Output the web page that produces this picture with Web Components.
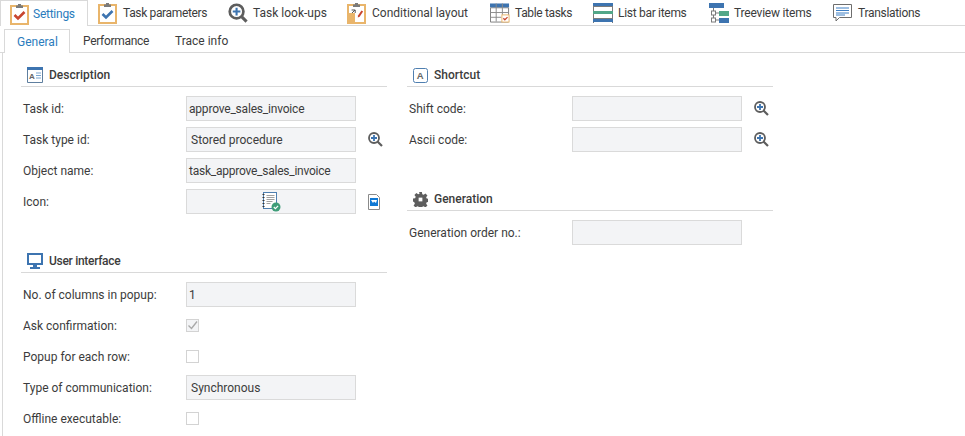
<!DOCTYPE html>
<html>
<head>
<meta charset="utf-8">
<style>
  html, body { margin: 0; padding: 0; background: #fff; }
  body { width: 965px; height: 436px; overflow: hidden; font-family: Roboto, "Open Sans", "Liberation Sans", sans-serif; font-size: 12px; color: #3c3c3c; }
</style>
</head>
<body>
<script>
(function () {
  const CLIP = (mark) => `<svg width="19" height="22" viewBox="0 0 19 22">
    <rect x="1" y="3" width="17" height="18" fill="#fff" stroke="#e9b56b" stroke-width="2"/>
    <path d="M6 2.500h2V1h3v1.500h2V5H6z" fill="#7b7b7b"/>${mark}</svg>`;

  const ICONS = {
    settings: CLIP('<path d="M4.500 12l3.500 3.500 6.500-6.500" fill="none" stroke="#c8452f" stroke-width="2.600"/>'),
    params: CLIP('<path d="M4.500 12l3.500 3.500 6.500-6.500" fill="none" stroke="#3d74b0" stroke-width="2.600"/>'),
    lookup: `<svg width="21" height="22" viewBox="0 0 21 22">
      <circle cx="9" cy="9.500" r="7.200" fill="#fff" stroke="#5d5d5d" stroke-width="2.800"/>
      <path d="M14.500 15l5 5" stroke="#5d5d5d" stroke-width="3.200"/>
      <path d="M9 5.500v8M5 9.500h8" stroke="#3d74b0" stroke-width="2.200"/></svg>`,
    conditional: `<svg width="19" height="22" viewBox="0 0 19 22">
      <rect x="1" y="3" width="17" height="18" fill="#fff" stroke="#e9b56b" stroke-width="2"/>
      <path d="M6 2.500h2V1h3v1.500h2V5H6z" fill="#7b7b7b"/>
      <path d="M1 11h7v9H1z" fill="#e9b56b"/>
      <path d="M5 11l3-3M4.600 8h3.600v3" fill="none" stroke="#555" stroke-width="1"/>
      <path d="M11 13.500l3.500-5 1.600 1.100-3.500 5.200-1.800.6z" fill="#c8452f"/></svg>`,
    table: `<svg width="21" height="20" viewBox="0 0 21 20">
      <path d="M.5 4.500h19v15H.5z" fill="#fff" stroke="#7b7b7b"/>
      <path d="M0 0h20v4H0z" fill="#3d74b0"/>
      <path d="M6.500 0v19M13 0v12" stroke="#8a8a8a"/>
      <path d="M0 9.500h20M0 14.500h12" stroke="#8a8a8a"/>
      <rect x="12.500" y="12" width="7.500" height="7.500" fill="#fff" stroke="#e9b56b"/>
      <path d="M14 15.500l1.600 1.600 2.800-2.800" fill="none" stroke="#c8452f" stroke-width="1.300"/></svg>`,
    listbar: `<svg width="20" height="20" viewBox="0 0 20 20">
      <path d="M0 0h20v3H0z" fill="#3d74b0"/>
      <path d="M.5 3v5M19.500 3v5M.5 11v5M19.500 11v5M.5 19v1M19.500 19v1" stroke="#7b7b7b"/>
      <path d="M0 3.500h20" stroke="#7b7b7b"/>
      <path d="M0 8h20v3H0z" fill="#52a688"/>
      <path d="M0 15.500h20" stroke="#7b7b7b"/>
      <path d="M0 16h20v3H0z" fill="#3d74b0"/></svg>`,
    tree: `<svg width="20" height="20" viewBox="0 0 20 20">
      <path d="M0 0h15v5H0z" fill="#3d74b0"/>
      <path d="M4.500 5v3M4.500 12v3M7 10h3M7 17h3" stroke="#7b7b7b"/>
      <rect x="2.500" y="8" width="4" height="4" fill="#fff" stroke="#7b7b7b"/>
      <rect x="2.500" y="15" width="4" height="4" fill="#fff" stroke="#7b7b7b"/>
      <path d="M10 8h10v5H10z" fill="#52a688"/>
      <path d="M10 15h10v5H10z" fill="#3d74b0"/></svg>`,
    translate: `<svg width="19" height="18" viewBox="0 0 19 18">
      <path d="M.5.500h18v13H6.500L3 17v-3.500H.5z" fill="#fff" stroke="#6e6e6e"/>
      <path d="M3 4h13M3 6.500h13M3 9h13M3 11h9" stroke="#3d7fc4"/></svg>`,
    description: `<svg width="16" height="16" viewBox="0 0 16 16">
      <path d="M.5 1h15v14.500H.5z" fill="#fff" stroke="#5f7f9f"/>
      <path d="M0 0h16v3H0z" fill="#3d74b0"/>
      <text x="2" y="12" font-family="Liberation Sans, sans-serif" font-size="8" font-weight="700" fill="#666">A</text>
      <path d="M9 6h5M9 8.500h5M9 11h5" stroke="#7aa6d0"/></svg>`,
    monitor: `<svg width="16" height="16" viewBox="0 0 16 16">
      <rect x="1" y="1" width="14" height="10" fill="#fff" stroke="#3d74b0" stroke-width="2"/>
      <path d="M6 12h4v2H6zM3 14h10v2H3z" fill="#3d74b0"/></svg>`,
    shortcut: `<svg width="15" height="15" viewBox="0 0 15 15">
      <rect x=".5" y=".5" width="14" height="14" rx="2" fill="#fff" stroke="#4f7fb0"/>
      <text x="3.800" y="11" font-family="Liberation Sans, sans-serif" font-size="9.500" font-weight="700" fill="#666">A</text></svg>`,
    gear: `<svg width="15" height="15" viewBox="0 0 16 16">
      <path d="M6.500 0h3l.4 2.300 1.500.6L13.300 1.500l2.100 2.100-1.400 1.900.6 1.500 2.400.5v3l-2.400.4-.6 1.500 1.400 2-2.100 2.100-2-1.400-1.400.6-.4 2.300h-3l-.4-2.300-1.500-.6-1.900 1.400-2.100-2.100 1.400-2-.6-1.500L0 10V7l2.300-.4.600-1.500-1.400-2L3.600 1l1.900 1.400 1.500-.6z" fill="#5e5e5e"/>
      <rect x="6" y="6" width="4" height="4" fill="#fff"/></svg>`,
    zoom: `<svg width="15" height="15" viewBox="0 0 15 15">
      <circle cx="6" cy="6" r="5" fill="#fff" stroke="#5d5d5d" stroke-width="1.800"/>
      <path d="M9.500 9.500l4.500 4.500" stroke="#5d5d5d" stroke-width="2.200"/>
      <path d="M6 3v6M3 6h6" stroke="#3d74b0" stroke-width="1.800"/></svg>`,
    image: `<svg width="12" height="16" viewBox="0 0 12 16">
      <path d="M.5.500h8l3 3v12H.5z" fill="#fff" stroke="#8a8a8a"/>
      <path d="M2 4h8v8H2z" fill="#0f78d4"/>
      <path d="M3 6h6l-1 3L6 7.500 5 9z" fill="#fff"/></svg>`,
    taskfile: `<svg width="19" height="20" viewBox="0 0 19 20">
      <rect x="1.500" y=".5" width="13" height="16" fill="#fff" stroke="#4f7fb0"/>
      <path d="M1.500 2v1M1.500 5v1M1.500 8v1M1.500 11v1M1.500 14v1" stroke="#333" stroke-width="2"/>
      <path d="M4.500 3.500h8M4.500 5.500h8M4.500 7.500h8M4.500 9.500h6M4.500 11.500h4" stroke="#a0a0a0"/>
      <circle cx="14" cy="15" r="4.500" fill="#3e9d78"/>
      <path d="M11.800 15l1.600 1.600 2.700-2.700" fill="none" stroke="#fff" stroke-width="1.200"/></svg>`
  };

  class UiIcon extends HTMLElement {
    connectedCallback() {
      const shadow = this.shadowRoot || this.attachShadow({ mode: "open" });
      shadow.innerHTML = `<style>
        :host { display: inline-flex; align-items: center; justify-content: center; flex: none; }
        :host([box]) { width: 20px; justify-content: flex-start; }
        svg { display: block; }
      </style>${ICONS[this.getAttribute("name")] || ""}`;
    }
  }

  class TabStrip extends HTMLElement {
    constructor() {
      super();
      const shadow = this.attachShadow({ mode: "open" });
      shadow.innerHTML = `<style>
        :host { display: flex; box-sizing: border-box; height: var(--strip-height, 26px); padding-left: var(--strip-left, 0); padding-top: var(--strip-top, 0); border-bottom: 1px solid #d9d9d9; }
      </style><slot></slot>`;
    }
  }

  class TabItem extends HTMLElement {
    constructor() {
      super();
      const shadow = this.attachShadow({ mode: "open" });
      shadow.innerHTML = `<style>
        :host { display: flex; align-items: center; gap: 5px; flex: none; box-sizing: border-box; height: 100%; white-space: nowrap; padding: var(--tab-pad); padding-top: 1px; color: #3c3c3c; }
        :host([active]) { color: #2b7cbd; background: #fff; border: 1px solid #d9d9d9; border-bottom: 0; margin-bottom: -1px; height: calc(100% + 1px); padding-left: var(--active-left); gap: var(--active-gap, 5px); }
      </style><slot></slot>`;
    }
  }

  class FormGroup extends HTMLElement {
    constructor() {
      super();
      const shadow = this.attachShadow({ mode: "open" });
      shadow.innerHTML = `<style>
        :host { display: block; width: 366px; }
        .head { display: flex; align-items: center; gap: 6px; box-sizing: border-box; height: 23px; padding-left: 6px; border-bottom: 1px solid #d9d9d9; margin-bottom: 9px; font-weight: 500; color: #3c3c3c; }
        .title { letter-spacing: var(--title-spacing, normal); }
        .rows { display: grid; row-gap: 6px; padding-left: 2px; }
      </style>
      <div class="head"><slot name="icon"></slot><span class="title"></span></div>
      <div class="rows"><slot></slot></div>`;
    }
    connectedCallback() {
      this.shadowRoot.querySelector(".title").textContent = this.getAttribute("title");
      this.removeAttribute("title");
    }
  }

  class FormRow extends HTMLElement {
    constructor() {
      super();
      const shadow = this.attachShadow({ mode: "open" });
      shadow.innerHTML = `<style>
        :host { display: grid; grid-template-columns: 163px 170px 33px; align-items: center; height: 25px; }
        .label { white-space: nowrap; padding-top: 1px; }
        .action { padding-left: 12px; display: flex; }
      </style>
      <span class="label"></span>
      <div><slot></slot></div>
      <div class="action"><slot name="action"></slot></div>`;
    }
    connectedCallback() {
      this.shadowRoot.querySelector(".label").textContent = this.getAttribute("label");
    }
  }

  class FieldBox extends HTMLElement {
    constructor() {
      super();
      const shadow = this.attachShadow({ mode: "open" });
      shadow.innerHTML = `<style>
        :host { display: flex; align-items: center; box-sizing: border-box; width: 170px; height: 25px; padding-left: 2px; background: #f3f4f6; border: 1px solid #dadada; white-space: nowrap; color: #3c3c3c; }
        :host([lookup]) { padding-left: 4px; }
        :host([center]) { justify-content: center; padding-left: 0; }
      </style><slot></slot>`;
    }
  }

  class CheckBox extends HTMLElement {
    constructor() {
      super();
      const shadow = this.attachShadow({ mode: "open" });
      shadow.innerHTML = `<style>
        :host { display: block; box-sizing: border-box; width: 13px; height: 13px; background: #fff; border: 1px solid #d3d3d3; }
        :host([checked]) { background: #f3f4f6; }
        svg { display: none; }
        :host([checked]) svg { display: block; }
      </style>
      <svg width="11" height="11" viewBox="0 0 11 11"><path d="M1.500 5.500l3 3 5.500-7" fill="none" stroke="#a9a9a9" stroke-width="1.400"/></svg>`;
    }
  }

  class SettingsPage extends HTMLElement {
    constructor() {
      super();
      const shadow = this.attachShadow({ mode: "open" });
      shadow.innerHTML = `<style>
        :host { display: block; height: 436px; }
        .main { --strip-height: 26px; --tab-pad: 0 0 0 10px; --active-left: 9px; --active-gap: 3px; }
        .sub { --strip-height: 27px; --strip-left: 4px; --strip-top: 3px; --tab-pad: 0 0 0 13px; --active-left: 12px; align-items: flex-end; }
        .edge { border-left: 1px solid #d9d9d9; margin-left: 2px; height: 384px; }
        .body { display: flex; gap: 20px; padding: 11px 0 0 18px; }
        .col { display: flex; flex-direction: column; }
        .ui, .gen { margin-top: 36px; }
        .ui { --title-spacing: -.3px; }
      </style>
      <tab-strip class="main">
        <tab-item active style="width:88px;letter-spacing:-.25px"><ui-icon box name="settings"></ui-icon>Settings</tab-item>
        <tab-item style="width:130px;letter-spacing:-.35px"><ui-icon box name="params"></ui-icon>Task parameters</tab-item>
        <tab-item style="width:119px"><ui-icon box name="lookup"></ui-icon>Task look-ups</tab-item>
        <tab-item style="width:143px"><ui-icon box name="conditional"></ui-icon>Conditional layout</tab-item>
        <tab-item style="width:103px;letter-spacing:-.35px"><ui-icon box name="table"></ui-icon>Table tasks</tab-item>
        <tab-item style="width:116px;letter-spacing:-.3px"><ui-icon box name="listbar"></ui-icon>List bar items</tab-item>
        <tab-item style="width:124px;letter-spacing:-.2px"><ui-icon box name="tree"></ui-icon>Treeview items</tab-item>
        <tab-item style="letter-spacing:-.3px"><ui-icon box name="translate"></ui-icon>Translations</tab-item>
      </tab-strip>
      <tab-strip class="sub">
        <tab-item active style="width:66px">General</tab-item>
        <tab-item style="width:92px;letter-spacing:-.3px">Performance</tab-item>
        <tab-item>Trace info</tab-item>
      </tab-strip>
      <div class="edge">
        <div class="body">
          <div class="col">
            <form-group title="Description">
              <ui-icon slot="icon" name="description"></ui-icon>
              <form-row label="Task id:"><field-box style="letter-spacing:-.2px">approve_sales_invoice</field-box></form-row>
              <form-row label="Task type id:"><field-box lookup>Stored procedure</field-box><ui-icon slot="action" name="zoom"></ui-icon></form-row>
              <form-row label="Object name:"><field-box style="letter-spacing:-.24px">task_approve_sales_invoice</field-box></form-row>
              <form-row label="Icon:"><field-box center><ui-icon name="taskfile"></ui-icon></field-box><ui-icon slot="action" name="image"></ui-icon></form-row>
            </form-group>
            <form-group class="ui" title="User interface">
              <ui-icon slot="icon" name="monitor"></ui-icon>
              <form-row label="No. of columns in popup:"><field-box>1</field-box></form-row>
              <form-row label="Ask confirmation:"><check-box checked></check-box></form-row>
              <form-row label="Popup for each row:"><check-box></check-box></form-row>
              <form-row label="Type of communication:"><field-box lookup>Synchronous</field-box></form-row>
              <form-row label="Offline executable:"><check-box></check-box></form-row>
            </form-group>
          </div>
          <div class="col">
            <form-group title="Shortcut">
              <ui-icon slot="icon" name="shortcut"></ui-icon>
              <form-row label="Shift code:"><field-box></field-box><ui-icon slot="action" name="zoom"></ui-icon></form-row>
              <form-row label="Ascii code:"><field-box></field-box><ui-icon slot="action" name="zoom"></ui-icon></form-row>
            </form-group>
            <form-group class="gen" title="Generation">
              <ui-icon slot="icon" name="gear"></ui-icon>
              <form-row label="Generation order no.:"><field-box></field-box></form-row>
            </form-group>
          </div>
        </div>
      </div>`;
    }
  }

  customElements.define("ui-icon", UiIcon);
  customElements.define("tab-strip", TabStrip);
  customElements.define("tab-item", TabItem);
  customElements.define("form-group", FormGroup);
  customElements.define("form-row", FormRow);
  customElements.define("field-box", FieldBox);
  customElements.define("check-box", CheckBox);
  customElements.define("settings-page", SettingsPage);

  document.body.appendChild(document.createElement("settings-page"));
})();
</script>
</body>
</html>
